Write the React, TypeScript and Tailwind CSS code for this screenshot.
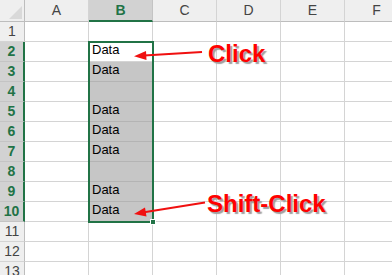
const cols = ['A', 'B', 'C', 'D', 'E', 'F'];
const rows = Array.from({ length: 13 }, (_, i) => i + 1);
const data: Record<number, string> = { 2: 'Data', 3: 'Data', 5: 'Data', 6: 'Data', 7: 'Data', 9: 'Data', 10: 'Data' };

const inSel = (r: number) => r >= 2 && r <= 10;

export default function App() {
  return (
    <div className="relative w-[392px] h-[275px] overflow-hidden bg-white font-['Liberation_Sans',Arial,sans-serif]">
      <div className="grid grid-cols-[25px_repeat(6,64px)] grid-rows-[22px_repeat(13,20px)]">
        {/* corner */}
        <div className="relative bg-[#efefef] border-r border-b border-[#bdbdbd]">
          <svg className="absolute left-0 top-0" width="25" height="22">
            <polygon points="22,6 22,19 9,19" fill="#d9d9d9" />
          </svg>
        </div>
        {cols.map((c) =>
          c === 'B' ? (
            <div
              key={c}
              className="flex items-center justify-center bg-[#d2d2d2] border-r border-[#c4c4c4] border-b-2 border-b-[#217346] text-[14px] font-bold text-[#217346]"
            >
              {c}
            </div>
          ) : (
            <div
              key={c}
              className="flex items-center justify-center bg-[#efefef] border-r border-r-[#d4d4d4] border-b border-b-[#bdbdbd] text-[14px] text-[#444]"
            >
              {c}
            </div>
          )
        )}
        {rows.map((r) => (
          <Row key={r} r={r} />
        ))}
      </div>

      {/* selection border */}
      <div className="absolute left-[88px] top-[41px] w-[66px] h-[182px] border-2 border-[#217346]" />
      <div className="absolute left-[150px] top-[219px] w-[6px] h-[6px] bg-[#217346] border border-white" />

      {/* arrows */}
      <svg className="absolute left-0 top-0" width="392" height="275">
        <line x1="202" y1="52" x2="144" y2="55.5" stroke="#f01010" strokeWidth="2" />
        <polygon points="134,56.2 146,51 146.5,60" fill="#f01010" />
        <line x1="205" y1="202.5" x2="144" y2="212.3" stroke="#f01010" strokeWidth="2" />
        <polygon points="134,214 145,207.5 146.5,216.5" fill="#f01010" />
      </svg>

      <div className="absolute left-[208px] top-[40px] text-[24px] leading-[28px] font-bold text-[#ff0000] [text-shadow:2px_2px_1px_#a0a0a0]">
        Click
      </div>
      <div className="absolute left-[207px] top-[190px] text-[24px] leading-[28px] font-bold text-[#ff0000] [text-shadow:2px_2px_1px_#a0a0a0]">
        Shift-Click
      </div>
    </div>
  );
}

function Row({ r }: { r: number }) {
  const sel = inSel(r);
  return (
    <>
      {sel ? (
        <div className="flex items-center justify-center bg-[#d2d2d2] border-b border-b-[#c4c4c4] border-r-2 border-r-[#217346] text-[14px] font-bold text-[#217346]">
          {r}
        </div>
      ) : (
        <div className="flex items-center justify-center bg-[#efefef] border-b border-b-[#d4d4d4] border-r border-r-[#bdbdbd] text-[14px] text-[#444]">
          {r}
        </div>
      )}
      {cols.map((c) => {
        const shaded = c === 'B' && sel && r !== 2;
        return (
          <div
            key={c}
            className={
              shaded
                ? 'flex items-end pl-[3px] pb-[2px] bg-[#c6c6c6] border-r border-b border-[#b4b4b4] text-[13px] text-black'
                : 'flex items-end pl-[3px] pb-[2px] border-r border-b border-[#d4d4d4] text-[13px] text-black'
            }
          >
            {c === 'B' ? data[r] ?? '' : ''}
          </div>
        );
      })}
    </>
  );
}
